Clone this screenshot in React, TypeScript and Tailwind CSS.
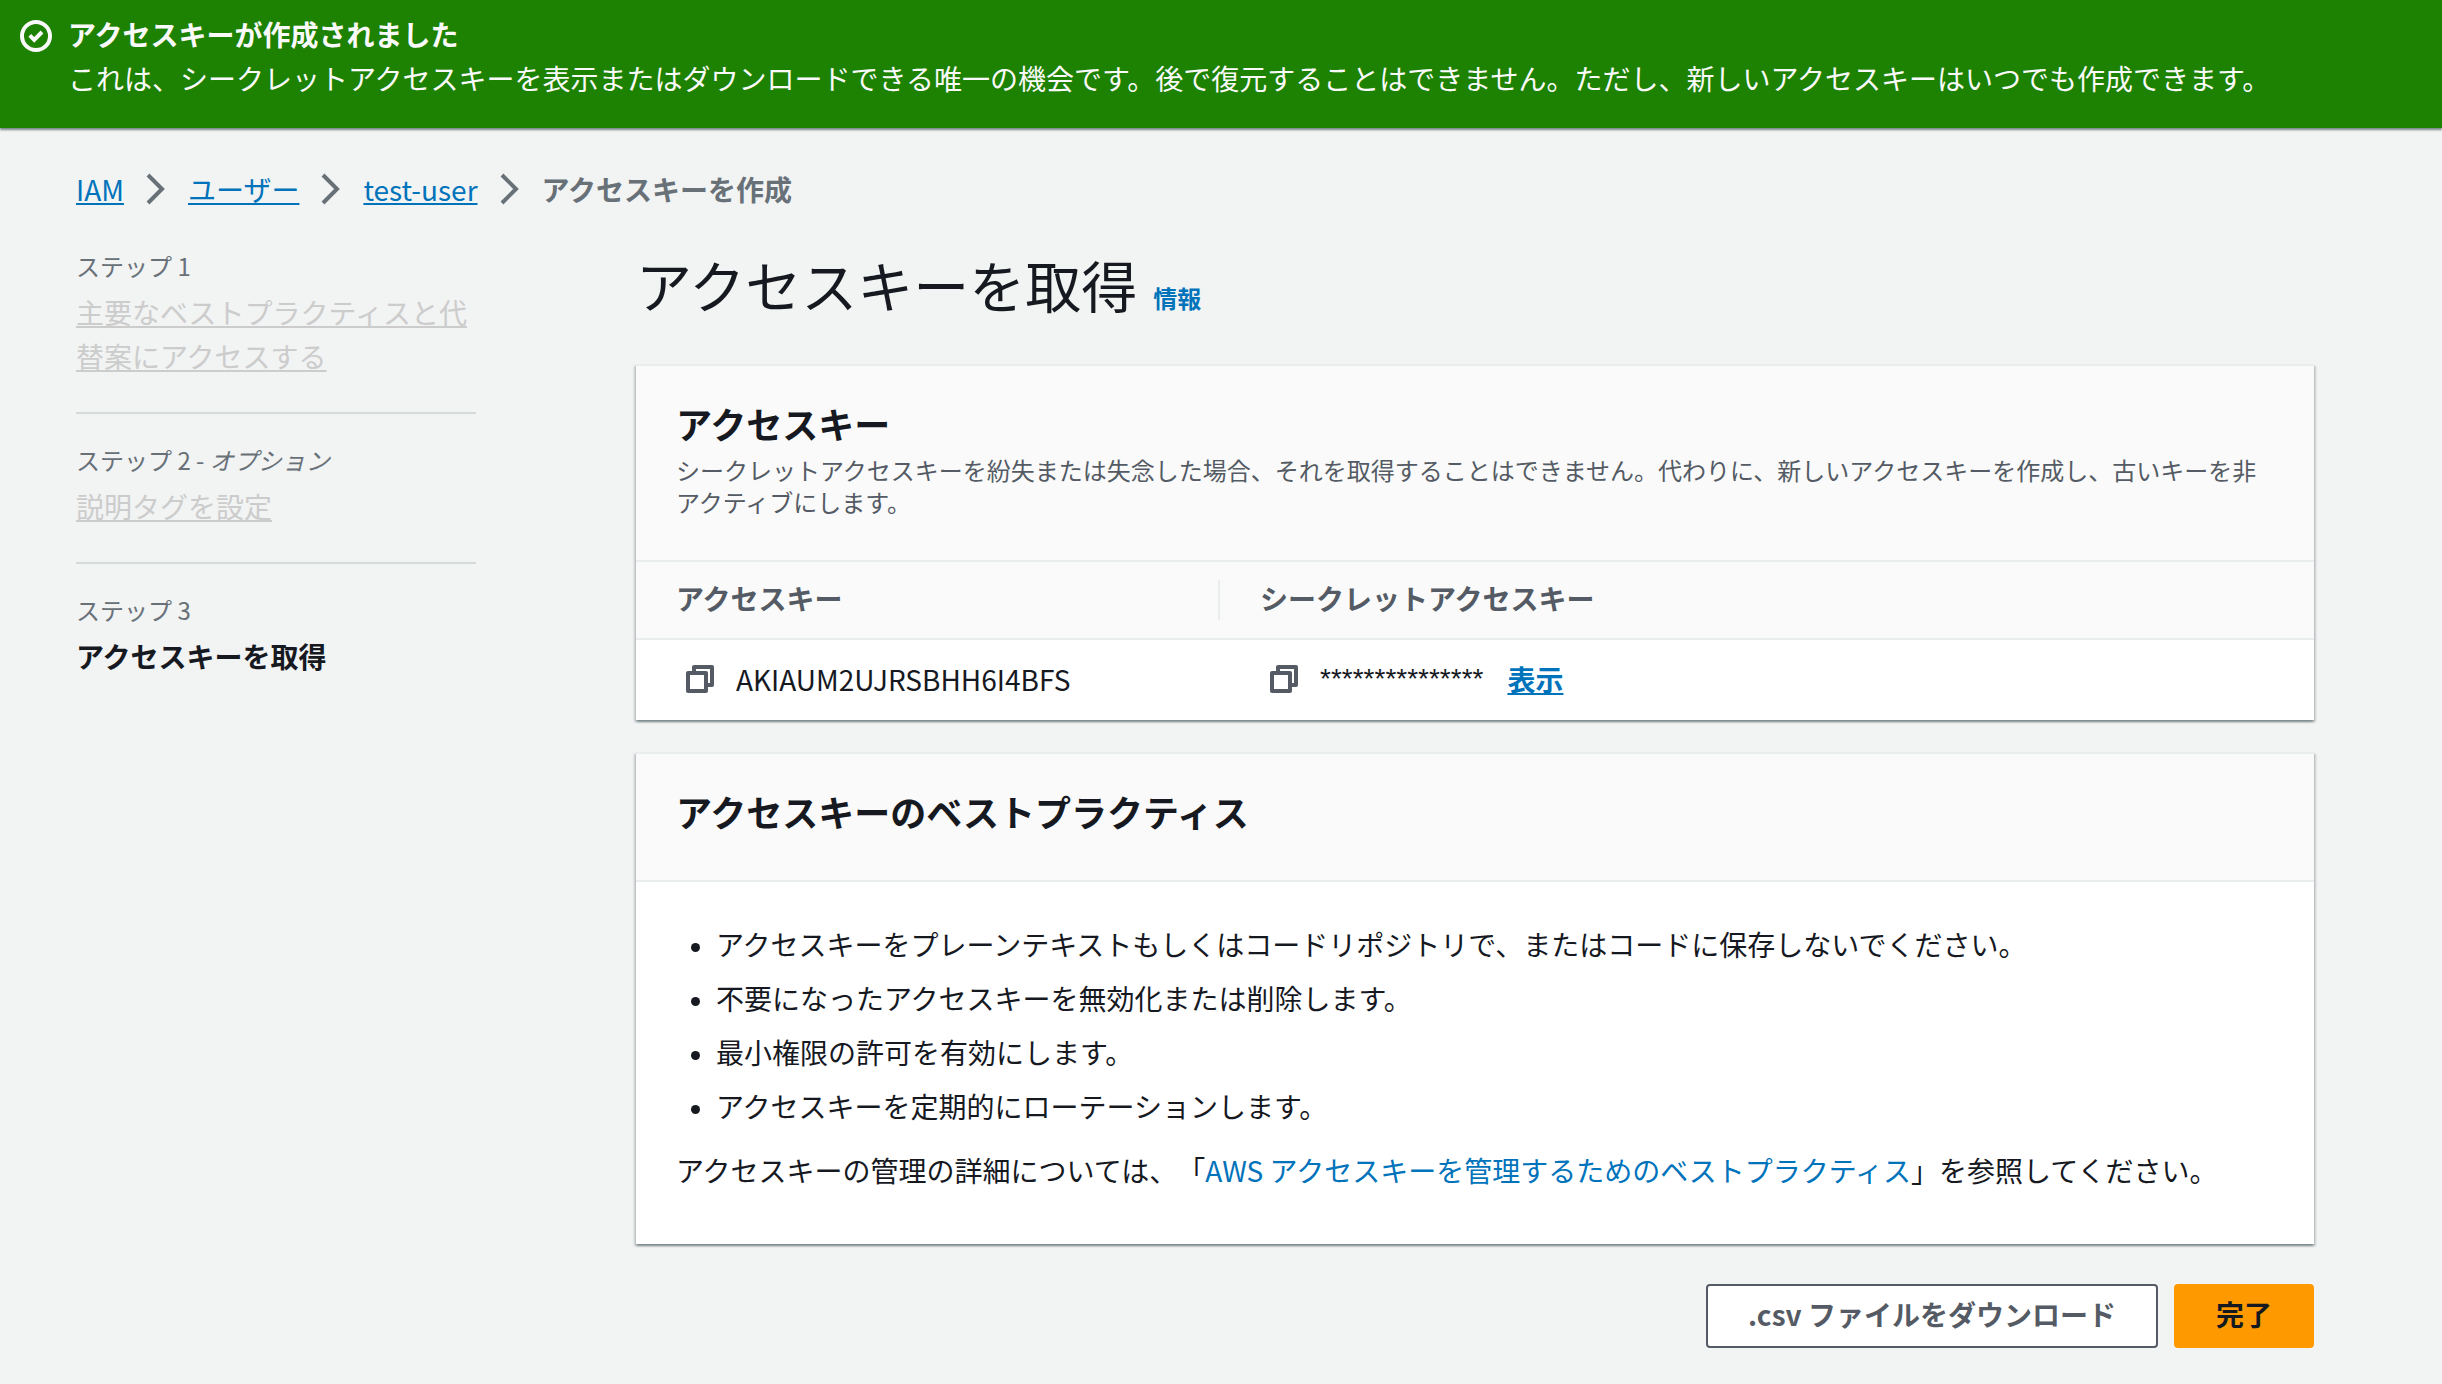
import type { ReactNode } from "react";

const cardShadow =
  "shadow-[0_2px_2px_0_rgba(0,28,36,0.3),2px_2px_2px_0_rgba(0,28,36,0.15),-2px_2px_2px_0_rgba(0,28,36,0.15)]";

function SuccessIcon() {
  return (
    <svg viewBox="0 0 16 16" className="mt-2 size-8 shrink-0" fill="none" stroke="currentColor" strokeWidth="2" aria-hidden="true">
      <circle cx="8" cy="8" r="7" />
      <path d="m4.9 7.7 2.2 2.2 3.9-3.9" />
    </svg>
  );
}

function ChevronIcon() {
  return (
    <svg viewBox="0 0 16 16" className="size-8 shrink-0 text-[#687078]" fill="none" stroke="currentColor" strokeWidth="2" aria-hidden="true">
      <path d="m4 1 7 7-7 7" />
    </svg>
  );
}

function CopyIcon() {
  return (
    <svg viewBox="0 0 16 16" className="size-8" fill="none" stroke="currentColor" strokeWidth="2" strokeLinejoin="round" aria-hidden="true">
      <path d="M2 5h9v9H2z" />
      <path d="M5 5V2h9v9h-3" />
    </svg>
  );
}

function CopyButton({ label }: { label: string }) {
  return (
    <button type="button" aria-label={label} className="text-[#545b64]">
      <CopyIcon />
    </button>
  );
}

function Crumb({ children }: { children: ReactNode }) {
  return (
    <li className="flex items-center gap-4">
      <a href="#" className="text-[#0073bb] underline">{children}</a>
      <ChevronIcon />
    </li>
  );
}

function Step({ label, children }: { label: ReactNode; children: ReactNode }) {
  return (
    <li className="flex flex-col gap-1 border-t-2 border-[#d5dbdb] pt-[26px] pb-[34px] first:border-t-0 first:pt-0">
      <div className="text-2xl leading-10 text-[#687078]">{label}</div>
      <div>{children}</div>
    </li>
  );
}

function Card({ children }: { children: ReactNode }) {
  return <section className={"border-t-2 border-[#eaeded] bg-white " + cardShadow}>{children}</section>;
}

const practices = [
  "アクセスキーをプレーンテキストもしくはコードリポジトリで、またはコードに保存しないでください。",
  "不要になったアクセスキーを無効化または削除します。",
  "最小権限の許可を有効にします。",
  "アクセスキーを定期的にローテーションします。",
];

export default function App() {
  return (
    <div lang="ja" className="min-h-screen bg-[#f2f3f3] font-['Noto_Sans_CJK_JP',sans-serif] text-[28px] leading-[44px] text-[#16191f] [text-spacing-trim:space-all]">
      <div role="status" className="flex gap-4 bg-[#1d8102] px-5 pt-3 pb-7 text-[#fafafa] shadow-[0_2px_2px_0_rgba(0,28,36,0.5)]">
        <SuccessIcon />
        <div>
          <div className="font-bold">アクセスキーが作成されました</div>
          <p>これは、シークレットアクセスキーを表示またはダウンロードできる唯一の機会です。後で復元することはできません。ただし、新しいアクセスキーはいつでも作成できます。</p>
        </div>
      </div>

      <div className="pt-[39px] pr-32 pb-8 pl-[76px]">
        <nav aria-label="パンくずリスト">
          <ol className="flex items-center gap-4">
            <Crumb>IAM</Crumb>
            <Crumb>ユーザー</Crumb>
            <Crumb>test-user</Crumb>
            <li className="font-bold text-[#687078]" aria-current="page">アクセスキーを作成</li>
          </ol>
        </nav>

        <div className="mt-[35px] flex gap-40">
          <ol className="w-[400px] shrink-0">
            <Step label="ステップ 1">
              <a className="text-[#cccccc] underline">主要なベストプラクティスと代替案にアクセスする</a>
            </Step>
            <Step label={<>ステップ 2 - <i>オプション</i></>}>
              <a className="text-[#cccccc] underline">説明タグを設定</a>
            </Step>
            <Step label="ステップ 3">
              <span className="font-bold">アクセスキーを取得</span>
            </Step>
          </ol>

          <main className="min-w-0 flex-1 pt-0.5">
            <div className="flex items-baseline gap-4">
              <h1 className="text-[56px] leading-[72px]">アクセスキーを取得</h1>
              <a href="#" className="text-2xl font-bold text-[#0073bb]">情報</a>
            </div>

            <div className="mt-11 flex flex-col gap-8">
              <Card>
                <header className="border-b-2 border-[#eaeded] bg-[#fafafa] px-10 pt-[35px] pb-[42px]">
                  <h2 className="text-4xl leading-[44px] font-bold">アクセスキー</h2>
                  <p className="mt-[9px] text-2xl leading-8 text-[#545b64]">
                    シークレットアクセスキーを紛失または失念した場合、それを取得することはできません。代わりに、新しいアクセスキーを作成し、古いキーを非アクティブにします。
                  </p>
                </header>
                <table className="w-full table-fixed text-left">
                  <thead className="border-b-2 border-[#eaeded] bg-[#fafafa] text-[#545b64]">
                    <tr>
                      <th scope="col" className="w-[584px] py-[18px]">
                        <div className="border-r-2 border-[#eaeded] pb-1 pl-10 leading-9">アクセスキー</div>
                      </th>
                      <th scope="col" className="py-[18px]">
                        <div className="pb-1 pl-10 leading-9">シークレットアクセスキー</div>
                      </th>
                    </tr>
                  </thead>
                  <tbody>
                    <tr>
                      <td className="pt-[17px] pb-[19px] pl-12">
                        <div className="flex items-center gap-5">
                          <CopyButton label="アクセスキーをコピー" />
                          <span>AKIAUM2UJRSBHH6I4BFS</span>
                        </div>
                      </td>
                      <td className="pt-[17px] pb-[19px] pl-12">
                        <div className="flex items-center gap-5">
                          <CopyButton label="シークレットアクセスキーをコピー" />
                          <div className="flex items-center gap-6">
                            <span className="font-['Liberation_Sans',sans-serif]">***************</span>
                            <button type="button" className="font-bold text-[#0073bb] underline">表示</button>
                          </div>
                        </div>
                      </td>
                    </tr>
                  </tbody>
                </table>
              </Card>

              <Card>
                <header className="border-b-2 border-[#eaeded] bg-[#fafafa] px-10 pt-[35px] pb-[47px]">
                  <h2 className="text-4xl leading-[44px] font-bold">アクセスキーのベストプラクティス</h2>
                </header>
                <div className="px-10 pt-10 pb-[52px]">
                  <ul className="flex list-disc flex-col gap-[10px] pl-10 marker:text-2xl">
                    {practices.map((item) => (
                      <li key={item}>{item}</li>
                    ))}
                  </ul>
                  <p className="mt-5">
                    アクセスキーの管理の詳細については、「<a href="#" className="text-[#0073bb]">AWS アクセスキーを管理するためのベストプラクティス</a>」を参照してください。
                  </p>
                </div>
              </Card>
            </div>

            <div className="mt-10 flex justify-end gap-4">
              <button type="button" className="rounded border-2 border-[#545b64] bg-white px-10 pt-1.5 pb-2.5 font-bold text-[#545b64]">.csv ファイルをダウンロード</button>
              <button type="button" className="rounded border-2 border-[#ff9900] bg-[#ff9900] px-10 pt-1.5 pb-2.5 font-bold">完了</button>
            </div>
          </main>
        </div>
      </div>
    </div>
  );
}
